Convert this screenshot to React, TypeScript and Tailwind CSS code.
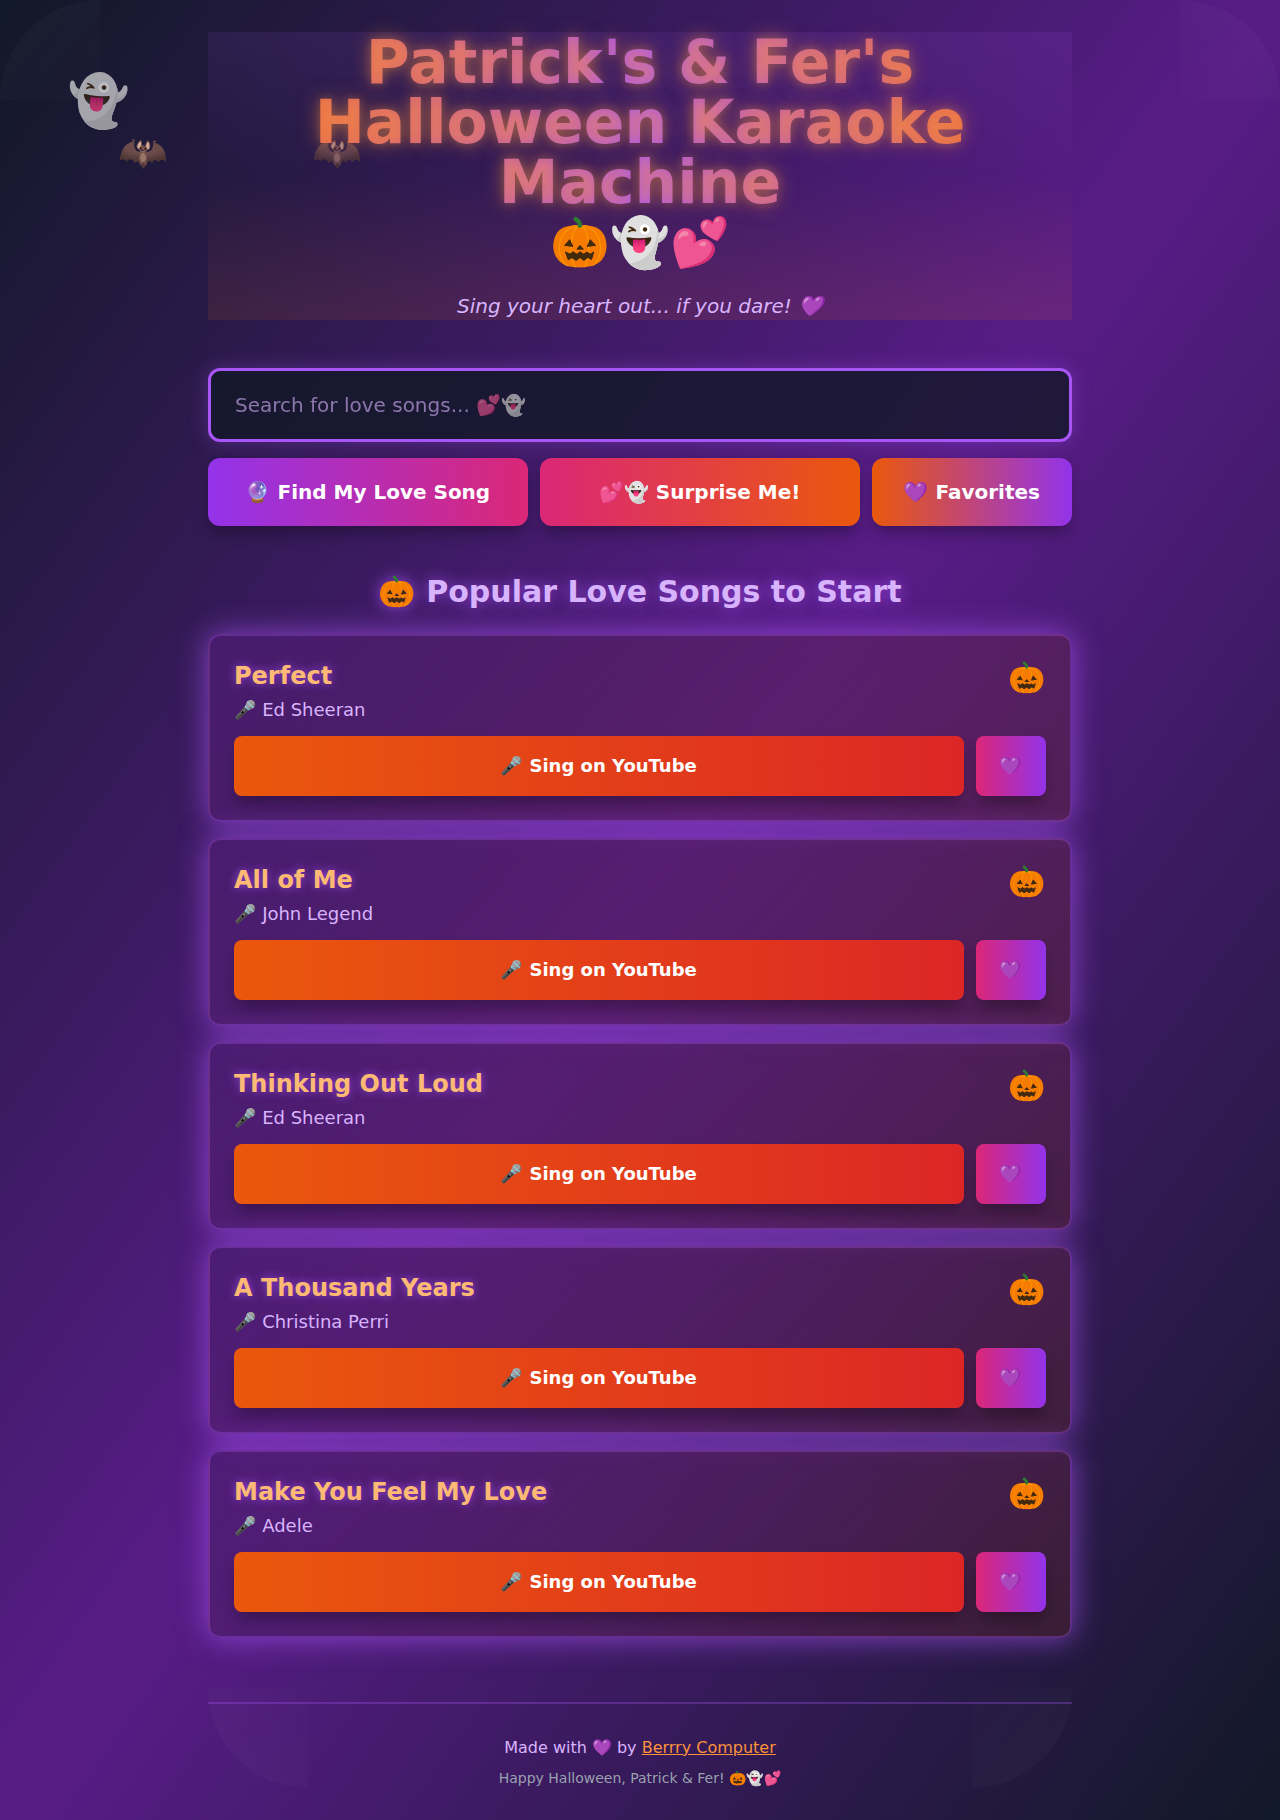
const songs = [
  { title: "Perfect", artist: "Ed Sheeran" },
  { title: "All of Me", artist: "John Legend" },
  { title: "Thinking Out Loud", artist: "Ed Sheeran" },
  { title: "A Thousand Years", artist: "Christina Perri" },
  { title: "Make You Feel My Love", artist: "Adele" },
];

function SongCard({ title, artist }: { title: string; artist: string }) {
  return (
    <div className="rounded-xl border-2 border-[#a855f7]/30 bg-[linear-gradient(135deg,rgba(76,29,115,0.8),rgba(124,45,18,0.25))] p-6 shadow-[0_0_30px_rgba(168,85,247,0.7)]">
      <div className="mb-3 flex items-start justify-between">
        <div>
          <h3 className="mb-1 text-2xl font-bold text-[#fdba74] [text-shadow:0_0_10px_rgba(168,85,247,0.8)]">{title}</h3>
          <p className="h-7 text-lg text-[#d8b4fe]">🎤 {artist}</p>
        </div>
        <span className="text-3xl">🎃</span>
      </div>
      <div className="flex gap-3">
        <button className="flex-1 rounded-lg bg-[linear-gradient(to_right,#ea580c,#dc2626)] px-6 py-4 text-lg font-bold text-white shadow-[0_10px_15px_-3px_rgba(0,0,0,0.3)]">
          🎤 Sing on YouTube
        </button>
        <button className="rounded-lg bg-[linear-gradient(to_right,#db2777,#9333ea)] px-6 py-4 text-lg font-bold text-white shadow-[0_10px_15px_-3px_rgba(0,0,0,0.3)]">
          💜
        </button>
      </div>
    </div>
  );
}

export default function App() {
  return (
    <div className="relative h-[1820px] overflow-hidden bg-[linear-gradient(to_bottom_right,#111827,#581c87,#111827)] font-['DejaVu_Sans','Noto_Color_Emoji',sans-serif] text-white">
      <div className="absolute left-0 top-0 h-[100px] w-[100px] rounded-tl-[100%] bg-[linear-gradient(135deg,rgba(255,255,255,0.03),rgba(255,255,255,0.005))]" />
      <div className="absolute right-0 top-0 h-[100px] w-[100px] rounded-tr-[100%] bg-[linear-gradient(225deg,rgba(255,255,255,0.03),rgba(255,255,255,0.005))]" />

      <div className="absolute left-[67px] top-[76px] rotate-[5deg] text-[50px] leading-none opacity-70">👻</div>
      <div className="absolute left-[118px] top-[122px] text-[40px] opacity-80">🦇</div>
      <div className="absolute left-[312px] top-[122px] text-[40px] opacity-60">🦇</div>

      <div className="relative mx-auto h-[1820px] max-w-[896px] px-4 py-8">
        <header className="mb-12 bg-[linear-gradient(to_bottom,rgba(168,85,247,0.1),rgba(168,85,247,0)_50%,rgba(249,115,22,0.1))] text-center">
          <h1 className="bg-[linear-gradient(to_right,#f97316,#a855f7,#f97316)] bg-clip-text text-6xl font-bold text-transparent [text-shadow:0_0_10px_rgba(251,146,60,0.3),0_0_20px_rgba(251,146,60,0.5)]">
            Patrick's &amp; Fer's Halloween Karaoke Machine
          </h1>
          <div className="mb-2.5 mt-1.5 h-16 text-5xl">🎃👻💕</div>
          <p className="text-xl italic text-[#d8b4fe]">Sing your heart out... if you dare! 💜</p>
        </header>

        <div className="mb-12">
          <input
            type="text"
            placeholder="Search for love songs... 💕👻"
            className="mb-4 w-full rounded-xl border-[3px] border-[#a855f7] bg-[#111827]/80 px-6 py-5 text-xl text-white shadow-[0_0_20px_rgba(168,85,247,0.3)] outline-none placeholder:text-[#d8b4fe] placeholder:opacity-60"
          />
          <div className="flex gap-3">
            <button className="flex-1 rounded-xl bg-[linear-gradient(to_right,#9333ea,#db2777)] px-8 py-5 text-xl font-bold shadow-[0_10px_15px_-3px_rgba(0,0,0,0.3)]">🔮 Find My Love Song</button>
            <button className="flex-1 rounded-xl bg-[linear-gradient(to_right,#db2777,#ea580c)] px-8 py-5 text-xl font-bold shadow-[0_10px_15px_-3px_rgba(0,0,0,0.3)]">💕👻 Surprise Me!</button>
            <button className="rounded-xl bg-[linear-gradient(to_right,#ea580c,#9333ea)] px-8 py-5 text-xl font-bold shadow-[0_10px_15px_-3px_rgba(0,0,0,0.3)]">💜 Favorites</button>
          </div>
        </div>

        <h2 className="mb-6 text-center text-3xl font-bold text-[#d8b4fe] [text-shadow:0_0_15px_rgba(168,85,247,0.8)]">🎃 Popular Love Songs to Start</h2>

        <div className="flex flex-col gap-4">
          {songs.map((s) => (
            <SongCard key={s.title} title={s.title} artist={s.artist} />
          ))}
        </div>

        <footer className="relative mt-16 border-t-2 border-[#a855f7]/30 pt-8 text-center">
          <p className="mb-2 text-[#d8b4fe]">
            Made with 💜 by <a href="#" className="text-[#fb923c] underline">Berrry Computer</a>
          </p>
          <p className="text-sm text-gray-400">Happy Halloween, Patrick &amp; Fer! 🎃👻💕</p>
        </footer>

        <div className="absolute bottom-8 left-4 h-[100px] w-[100px] rounded-bl-[100%] bg-[linear-gradient(45deg,rgba(255,255,255,0.03),rgba(255,255,255,0.005))]" />
        <div className="absolute bottom-8 right-4 h-[100px] w-[100px] rounded-br-[100%] bg-[linear-gradient(315deg,rgba(255,255,255,0.03),rgba(255,255,255,0.005))]" />
      </div>
    </div>
  );
}
